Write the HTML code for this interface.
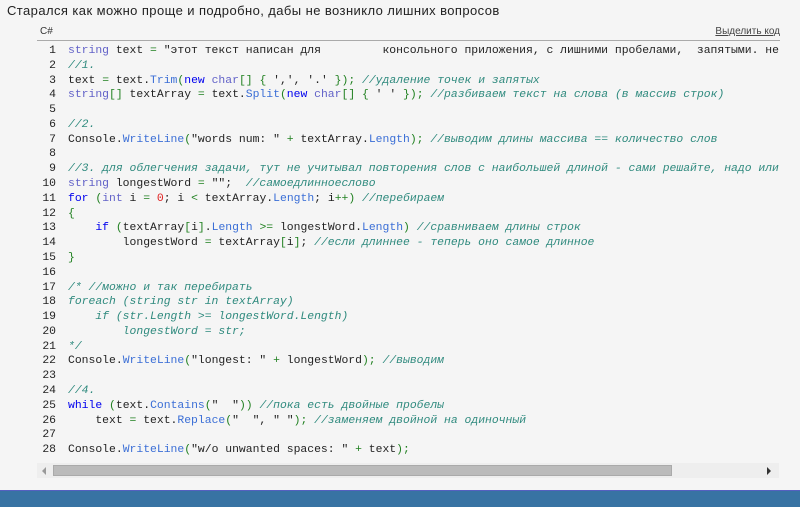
<!DOCTYPE html>
<html><head><meta charset="utf-8"><style>
body{margin:0;width:800px;height:506px;background:#f5f5f5;font-family:"Liberation Sans","DejaVu Sans",sans-serif;overflow:hidden;position:relative}
.t{position:absolute;left:7px;top:3px;font-size:13px;letter-spacing:0.42px;color:#222}
.hd{position:absolute;left:37px;top:24px;width:743px;height:16px;border-bottom:1px solid #aaa;font-size:10px;color:#333}
.hd .l{position:absolute;left:3px;top:2px}
.hd .r{position:absolute;right:0;top:2px;text-decoration:underline;color:#444}
.code{position:absolute;left:37px;top:44px;width:742px;height:418px;overflow:hidden;font-family:"Liberation Mono","DejaVu Sans Mono",monospace;font-size:11.4px;line-height:14.78px;white-space:pre;color:#222}
.n{display:inline-block;width:19px;text-align:right;margin-right:12px;color:#222}
.k{color:#0000ee}.ty{color:#6262c8}.m{color:#3a6ed6}.c{color:#2f8a7e;font-style:italic}.o{color:#208020}.num{color:#e02020}
.sb{position:absolute;left:37px;top:463px;width:742px;height:15px;background:#eee}
.th{position:absolute;left:16px;top:2px;width:619px;height:11px;background:#bbb;border:1px solid #aaa;box-sizing:border-box}
.al{position:absolute;left:5px;top:4px;border:4px solid transparent;border-right:4px solid #999;border-left:0}
.ar{position:absolute;right:8px;top:4px;border:4px solid transparent;border-left:4px solid #333;border-right:0}
.bar{position:absolute;left:0;top:490px;width:800px;height:16px;background:#3873a3;border-top:1px solid #5560c0}
</style></head><body>
<div class="t">Старался как можно проще и подробно, дабы не возникло лишних вопросов</div>
<div class="hd"><span class="l">C#</span><span class="r">Выделить код</span></div>
<div class="code"><span class="n">1</span><span class="ty">string</span> text <span class="o">=</span> "этот текст написан для         консольного приложения, с лишними пробелами,  запятыми. не забудьте
<span class="n">2</span><span class="c">//1.</span>
<span class="n">3</span>text <span class="o">=</span> text.<span class="m">Trim</span><span class="o">(</span><span class="k">new</span> <span class="ty">char</span><span class="o">[]</span> <span class="o">{</span> ',', '.' <span class="o">});</span> <span class="c">//удаление точек и запятых</span>
<span class="n">4</span><span class="ty">string</span><span class="o">[]</span> textArray <span class="o">=</span> text.<span class="m">Split</span><span class="o">(</span><span class="k">new</span> <span class="ty">char</span><span class="o">[]</span> <span class="o">{</span> ' ' <span class="o">});</span> <span class="c">//разбиваем текст на слова (в массив строк)</span>
<span class="n">5</span>
<span class="n">6</span><span class="c">//2.</span>
<span class="n">7</span>Console.<span class="m">WriteLine</span><span class="o">(</span>"words num: " <span class="o">+</span> textArray.<span class="m">Length</span><span class="o">);</span> <span class="c">//выводим длины массива == количество слов</span>
<span class="n">8</span>
<span class="n">9</span><span class="c">//3. для облегчения задачи, тут не учитывал повторения слов с наибольшей длиной - сами решайте, надо или нет</span>
<span class="n">10</span><span class="ty">string</span> longestWord <span class="o">=</span> "";  <span class="c">//самоедлинноеслово</span>
<span class="n">11</span><span class="k">for</span> <span class="o">(</span><span class="ty">int</span> i <span class="o">=</span> <span class="num">0</span>; i <span class="o">&lt;</span> textArray.<span class="m">Length</span>; i<span class="o">++)</span> <span class="c">//перебираем</span>
<span class="n">12</span><span class="o">{</span>
<span class="n">13</span>    <span class="k">if</span> <span class="o">(</span>textArray<span class="o">[</span>i<span class="o">]</span>.<span class="m">Length</span> <span class="o">&gt;=</span> longestWord.<span class="m">Length</span><span class="o">)</span> <span class="c">//сравниваем длины строк</span>
<span class="n">14</span>        longestWord <span class="o">=</span> textArray<span class="o">[</span>i<span class="o">]</span>; <span class="c">//если длиннее - теперь оно самое длинное</span>
<span class="n">15</span><span class="o">}</span>
<span class="n">16</span>
<span class="n">17</span><span class="c">/* //можно и так перебирать</span>
<span class="n">18</span><span class="c">foreach (string str in textArray)</span>
<span class="n">19</span><span class="c">    if (str.Length &gt;= longestWord.Length)</span>
<span class="n">20</span><span class="c">        longestWord = str;</span>
<span class="n">21</span><span class="c">*/</span>
<span class="n">22</span>Console.<span class="m">WriteLine</span><span class="o">(</span>"longest: " <span class="o">+</span> longestWord<span class="o">);</span> <span class="c">//выводим</span>
<span class="n">23</span>
<span class="n">24</span><span class="c">//4.</span>
<span class="n">25</span><span class="k">while</span> <span class="o">(</span>text.<span class="m">Contains</span><span class="o">(</span>"  "<span class="o">))</span> <span class="c">//пока есть двойные пробелы</span>
<span class="n">26</span>    text <span class="o">=</span> text.<span class="m">Replace</span><span class="o">(</span>"  ", " "<span class="o">);</span> <span class="c">//заменяем двойной на одиночный</span>
<span class="n">27</span>
<span class="n">28</span>Console.<span class="m">WriteLine</span><span class="o">(</span>"w/o unwanted spaces: " <span class="o">+</span> text<span class="o">);</span></div>
<div class="sb"><div class="al"></div><div class="th"></div><div class="ar"></div></div>
<div class="bar"></div>
</body></html>
